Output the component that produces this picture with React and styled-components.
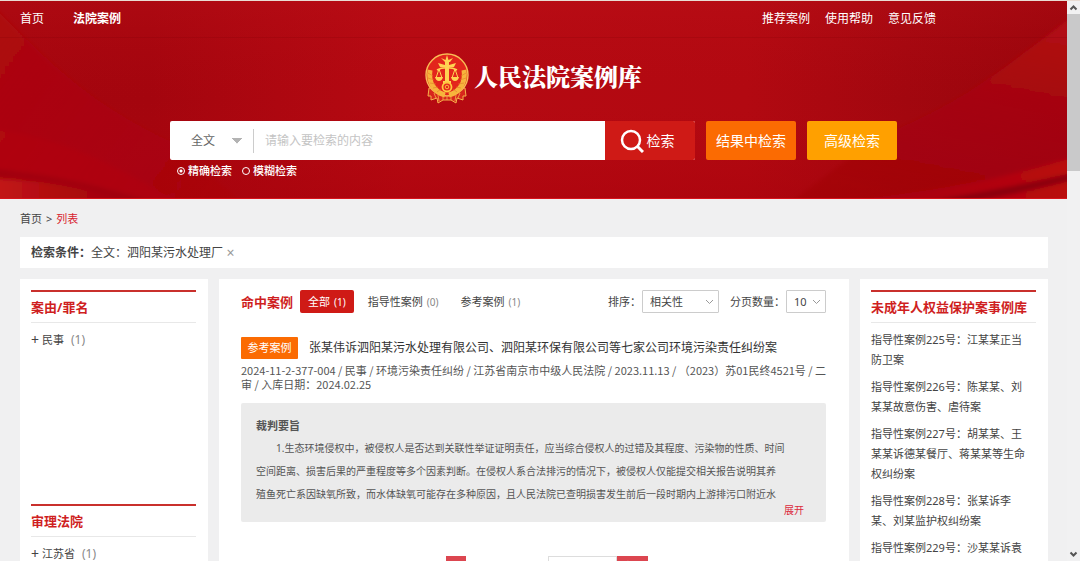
import React, { useState } from "react";
import styled, { createGlobalStyle, css } from "styled-components";

const GlobalStyle = createGlobalStyle`
  *, *::before, *::after { box-sizing: border-box; }
  body {
    margin: 0;
    background: #f0f0f1;
    color: #444;
    font-family: "Noto Sans", "Noto Sans CJK SC", sans-serif;
    font-size: 11px;
    line-height: 20px;
  }
  a { color: inherit; text-decoration: none; }
  button, input, select { font: inherit; color: inherit; margin: 0; }
  button { border: 0; padding: 0; cursor: pointer; }
  h1, h2, h3, p, ul, ol, dl { margin: 0; padding: 0; }
  ul, ol { list-style: none; }
`;

const Frame = styled.div`
  display: flex;
  height: 100vh;
  overflow: hidden;
  border-top: 1px solid #e9dcd3;
`;
const Page = styled.div`
  flex: 1;
  min-width: 0;
`;

/* window scroll bar */
const ScrollTrack = styled.div`
  width: 13px;
  display: flex;
  flex-direction: column;
  align-items: center;
  background: #f1f1f2;
`;
const ScrollThumb = styled.div`
  width: 100%;
  height: 28%;
  margin-bottom: auto;
  background: #c9c9ca;
`;
const ScrollArrow = styled.svg`
  width: 13px;
  height: 13px;
  flex: none;
  fill: none;
  stroke: #555;
  stroke-width: 2;
`;

/* header */
const Header = styled.header`
  position: relative;
  isolation: isolate;
  height: 198px;
  background: #ad0710;
  color: #fff;
  border-bottom: 1px solid #d6141c;
`;
const Drapery = styled.svg`
  position: absolute;
  inset: 0;
  z-index: -1;
  width: 100%;
  height: 100%;
`;
const TopNav = styled.nav`
  display: flex;
  justify-content: space-between;
  align-items: center;
  height: 37px;
  padding: 0 131px 0 20px;
  border-bottom: 1px solid rgba(120, 0, 8, 0.18);
  font-size: 12px;
`;
const NavGroup = styled.div`
  display: flex;
  gap: ${(p) => p.$gap}px;
`;
const NavLink = styled.a`
  font-weight: ${(p) => (p.$active ? 700 : 400)};
`;
const Brand = styled.h1`
  display: flex;
  justify-content: center;
  align-items: center;
  gap: 5px;
  height: 52px;
  margin-top: 15px;
  font-family: "Noto Serif CJK SC", "Noto Sans CJK SC", serif;
  font-size: 24px;
  font-weight: 900;
  line-height: 32px;
`;
const BrandName = styled.span`
  padding-bottom: 6px;
`;
const Emblem = styled.svg`
  width: 44px;
  height: 52px;
`;
const SearchForm = styled.form`
  width: 727px;
  max-width: 100%;
  margin: 16px auto 0;
`;
const SearchRow = styled.div`
  display: flex;
  gap: 11px;
  height: 39px;
`;
const SearchBox = styled.div`
  flex: 1;
  display: flex;
  align-items: center;
  border-radius: 2px;
  background: #fff;
  overflow: hidden;
`;
const ScopeSelect = styled.select`
  width: 84px;
  height: 24px;
  padding: 0 21px;
  border: 0;
  border-right: 1px solid #ccc;
  appearance: none;
  background: linear-gradient(to bottom left, #b3b3b3 50%, transparent 51%) 62px 9px / 5px 6px no-repeat,
    linear-gradient(to bottom right, #b3b3b3 50%, transparent 51%) 67px 9px / 5px 6px no-repeat;
  color: #666;
  font-size: 12px;
`;
const Keyword = styled.input`
  flex: 1;
  min-width: 0;
  height: 39px;
  padding: 0 11px;
  border: 0;
  outline: 0;
  font-size: 12px;
  &::placeholder { color: #c4c4c4; opacity: 1; }
`;
const tones = { red: "#cf1a16", orange: "#fb6b02", amber: "#ffa000" };
const ActionButton = styled.button`
  display: flex;
  justify-content: center;
  align-items: center;
  gap: 3px;
  width: 90px;
  height: 39px;
  padding-right: ${(p) => (p.$joined ? "6px" : "0")};
  border-radius: ${(p) => (p.$joined ? "0" : "2px")};
  background: ${(p) => tones[p.$tone]};
  color: #fff;
  font-size: 14px;
`;
const SearchIcon = styled.svg`
  width: 24px;
  height: 24px;
  fill: none;
  stroke: #fff;
`;
const Modes = styled.div`
  display: flex;
  gap: 10px;
  margin-top: 1px;
  padding-left: 7px;
`;
const ModeLabel = styled.label`
  display: flex;
  align-items: center;
  gap: 3px;
  font-weight: 500;
`;
const ModeRadio = styled.input`
  appearance: none;
  width: 8px;
  height: 8px;
  border: 1px solid #fff;
  border-radius: 50%;
  &:checked { background: radial-gradient(circle, #fff 1px, transparent 2px); }
`;

/* body */
const Body = styled.main`
  padding: 0 19px 0 20px;
`;
const Crumbs = styled.nav`
  display: flex;
  gap: 4px;
  padding: 10px 0 8px;
`;
const CrumbCurrent = styled.span`
  color: #d8232f;
`;
const Conditions = styled.section`
  display: flex;
  align-items: center;
  height: 31px;
  padding: 0 11px;
  background: #fff;
  font-size: 12px;
`;
const ClearButton = styled.button`
  width: 15px;
  background: none;
  color: #999;
  font-size: 14px;
`;
const Columns = styled.div`
  display: grid;
  grid-template-columns: 188px minmax(0, 1fr) 188px;
  gap: 11px;
  margin-top: 11px;
`;
const SidePanel = styled.aside`
  padding: 11px 12px 11px 11px;
  background: #fff;
`;
const Facet = styled.section`
  min-height: 214px;
  border-top: 2px solid #c9302c;
`;
const PanelTitle = styled.h2`
  padding: 5px 0;
  border-bottom: 1px solid #e8e8e8;
  color: #cf1f1f;
  font-size: 13px;
  font-weight: 700;
`;
const FacetItem = styled.button`
  display: flex;
  gap: 3px;
  margin-top: 7px;
  background: none;
  font-size: 11px;
`;
const PlusSign = styled.span`
  font-size: 14px;
`;
const Muted = styled.span`
  color: #888;
  font-size: ${(p) => (p.$small ? 10 : 12)}px;
  margin-left: 4px;
`;
const CaseLinks = styled.ul`
  display: grid;
  gap: 7px;
  margin-top: 7px;
  padding-right: 5px;
`;

const Results = styled.section`
  padding: 11px 23px 0 22px;
  background: #fff;
`;
const Toolbar = styled.div`
  display: flex;
  align-items: center;
  height: 23px;
`;
const ResultsTitle = styled.h2`
  margin-right: 7px;
  color: #cf1f1f;
  font-size: 13px;
  font-weight: 700;
`;
const Tab = styled.button`
  height: 23px;
  padding: 0 8px;
  margin-right: 6px;
  border-radius: 2px;
  background: none;
  ${(p) => p.$active && css`
    background: #cf1a16;
    color: #fff;
    ${Muted} { color: #fff; }
  `}
`;
const Sorting = styled.div`
  display: flex;
  align-items: center;
  gap: 11px;
  margin-left: auto;
`;
const SortLabel = styled.label`
  display: flex;
  align-items: center;
  gap: 1px;
`;
const SelectWrap = styled.span`
  position: relative;
  display: flex;
  width: ${(p) => p.$width}px;
`;
const SortSelect = styled.select`
  width: 100%;
  height: 23px;
  padding: 0 7px;
  border: 1px solid #ccc;
  border-radius: 1px;
  appearance: none;
  background: #fff;
`;
const Chevron = styled.svg`
  position: absolute;
  right: 5px;
  top: 8px;
  width: 9px;
  height: 8px;
  fill: none;
  stroke: #999;
  pointer-events: none;
`;
const CaseHead = styled.div`
  display: flex;
  align-items: center;
  gap: 11px;
  margin-top: 24px;
`;
const Tag = styled.span`
  width: 57px;
  height: 22px;
  border-radius: 1px;
  background: #fb6b02;
  color: #fff;
  line-height: 22px;
  text-align: center;
`;
const CaseTitle = styled.h3`
  font-size: 12px;
  font-weight: 400;
  color: #333;
`;
const Meta = styled.p`
  margin-top: 4px;
  color: #555;
  font-family: "Noto Sans CJK SC", sans-serif;
  line-height: 14px;
  white-space: nowrap;
`;
const Digest = styled.div`
  height: 119px;
  margin-top: 12px;
  padding: 12px 15px 0;
  border-radius: 2px;
  background: #ebebeb;
  color: #555;
`;
const DigestTitle = styled.h3`
  font-size: 11px;
  line-height: 22px;
`;
const DigestText = styled.p`
  font-size: 10px;
  line-height: 23px;
  text-indent: 2em;
`;
const Expand = styled.button`
  display: block;
  margin: -6px 7px 0 auto;
  background: none;
  color: #dc2a3c;
  font-size: 10px;
`;
const Pager = styled.nav`
  display: flex;
  justify-content: center;
  gap: 82px;
  margin-top: 34px;
  padding-left: 27px;
`;
const PageButton = styled.button`
  width: ${(p) => p.$width}px;
  height: 22px;
  background: #dc4650;
  color: #fff;
`;
const Jump = styled.div`
  display: flex;
`;
const JumpInput = styled.input`
  width: 69px;
  height: 22px;
  border: 1px solid #ddd;
`;

function CourtEmblem() {
  return (
    <Emblem viewBox="0 0 44 52" aria-hidden="true">
      <path d="M4 35 L3 43 L6 43 L6 47 L12 45 L13 50 L18 47 L26 47 L31 50 L32 45 L38 47 L38 43 L41 43 L40 35Z" fill="#d8271c" stroke="#f6b34a" strokeWidth="1" />
      <path d="M9 40 l2 5 M13 42 l1 6 M35 40 l-2 5 M31 42 l-1 6 M18 44 v3 M22 44 v3 M26 44 v3" stroke="#f6b34a" strokeWidth="0.8" />
      <circle cx="22" cy="22" r="21" fill="#e3261c" stroke="#f8bd55" strokeWidth="1.4" />
      <path d="M5 17 C3 29 9 39 20 42 M39 17 C41 29 35 39 24 42" fill="none" stroke="#f7b43c" strokeWidth="5" />
      <path d="M3 20 l5 3 M3 25 l6 2 M5 30 l6 1 M8 35 l5 -1 M12 39 l4 -3 M41 20 l-5 3 M41 25 l-6 2 M39 30 l-6 1 M36 35 l-5 -1 M32 39 l-4 -3" stroke="#e07a28" strokeWidth="0.6" />
      <path d="M20.5 7 L22 2 L23.5 7 L28 5 L25 9 L24 9 V12 L31 10 L29 14 L24 14.5 V29 H20 V14.5 L15 14 L13 10 L20 12 V9 L16 5Z" fill="#ffd352" />
      <path d="M12 17 C17 14 27 14 32 17" fill="none" stroke="#ffd352" strokeWidth="1.6" />
      <path d="M14 16 l-3 9 M14 16 l3 9 M30 16 l-3 9 M30 16 l3 9" stroke="#ffd352" strokeWidth="1" />
      <path d="M10 24 h8 q-1 4 -4 4 q-3 0 -4 -4Z M26 24 h8 q-1 4 -4 4 q-3 0 -4 -4Z" fill="#ffd352" />
      <path d="M18 28 h8 v3 h-8Z" fill="#ffd352" />
      <circle cx="22" cy="34" r="4.5" fill="#e3261c" stroke="#ffc83f" strokeWidth="1.8" />
      <circle cx="22" cy="34" r="1.8" fill="#e3261c" stroke="#ffc83f" strokeWidth="0.9" />
    </Emblem>
  );
}

function HeaderDrapery() {
  return (
    <Drapery viewBox="0 0 1067 198" preserveAspectRatio="none" aria-hidden="true">
      <defs>
        <linearGradient id="base" x1="0" x2="1">
          <stop offset="0" stopColor="#a5060e" />
          <stop offset="0.14" stopColor="#a4050e" />
          <stop offset="0.38" stopColor="#b60912" />
          <stop offset="0.7" stopColor="#b20911" />
          <stop offset="0.85" stopColor="#a2070f" />
          <stop offset="1" stopColor="#98040b" />
        </linearGradient>
        <linearGradient id="shade" x1="0" y1="0" x2="0" y2="1">
          <stop offset="0" stopColor="#c0121a" stopOpacity="0.3" />
          <stop offset="0.5" stopColor="#b20810" stopOpacity="0" />
          <stop offset="1" stopColor="#a8000a" stopOpacity="0.4" />
        </linearGradient>
        <linearGradient id="leftFold" x1="0" y1="0" x2="1" y2="0.6">
          <stop offset="0" stopColor="#ad0810" />
          <stop offset="1" stopColor="#ac0610" stopOpacity="0.3" />
        </linearGradient>
        <linearGradient id="leftRibbon" x1="0" x2="1">
          <stop offset="0" stopColor="#c61a19" />
          <stop offset="1" stopColor="#b4060e" stopOpacity="0" />
        </linearGradient>
        <linearGradient id="rightFold" x1="1" y1="0" x2="0.7" y2="1">
          <stop offset="0" stopColor="#b40c15" />
          <stop offset="1" stopColor="#9d040c" stopOpacity="0.4" />
        </linearGradient>
        <linearGradient id="rightRibbon" x1="0" x2="1">
          <stop offset="0" stopColor="#b0060d" stopOpacity="0.3" />
          <stop offset="1" stopColor="#bb080e" />
        </linearGradient>
        <filter id="soft" x="-5%" y="-20%" width="110%" height="140%">
          <feGaussianBlur stdDeviation="2" />
        </filter>
      </defs>
      <rect width="1067" height="198" fill="url(#base)" />
      <rect width="1067" height="198" fill="url(#shade)" />
      <g filter="url(#soft)">
        <path d="M-10 2 C45 58 90 105 175 143 L250 210 L-10 210Z" fill="url(#leftFold)" />
        <path d="M-10 128 C60 137 110 160 190 210 L-10 210Z" fill="#b3070f" opacity="0.5" />
        <path d="M-10 168 C50 174 90 183 155 202 L-10 210Z" fill="#98030b" opacity="0.55" />
        <path d="M-10 178 C45 181 85 188 130 202 L-10 210Z" fill="url(#leftRibbon)" />
        <path d="M1077 12 C1000 70 960 105 880 135 L780 210 L1077 210Z" fill="url(#rightFold)" />
        <path d="M1077 156 C1010 176 950 190 850 200 L1077 210Z" fill="url(#rightRibbon)" />
        <path d="M1077 172 C1030 183 990 191 925 202 L965 202 C1020 194 1040 188 1077 179Z" fill="#84040a" opacity="0.85" />
      </g>
    </Drapery>
  );
}

function Dropdown({ label, width, options }) {
  return (
    <SortLabel>
      {label}
      <SelectWrap $width={width}>
        <SortSelect>
          {options.map((o) => <option key={o}>{o}</option>)}
        </SortSelect>
        <Chevron viewBox="0 0 9 8" aria-hidden="true"><path d="M1 2 L4.5 5.5 L8 2" /></Chevron>
      </SelectWrap>
    </SortLabel>
  );
}

const facets = [
  { title: "案由/罪名", item: "民事", count: 1 },
  { title: "审理法院", item: "江苏省", count: 1 },
];
const tabs = [["全部", 1], ["指导性案例", 0], ["参考案例", 1]];
const juvenileCases = [
  "指导性案例225号：江某某正当防卫案",
  "指导性案例226号：陈某某、刘某某故意伤害、虐待案",
  "指导性案例227号：胡某某、王某某诉德某餐厅、蒋某某等生命权纠纷案",
  "指导性案例228号：张某诉李某、刘某监护权纠纷案",
  "指导性案例229号：沙某某诉袁某某探望权纠纷案",
];

export default function App() {
  const [mode, setMode] = useState("精确检索");
  const [tab, setTab] = useState("全部");
  return (
    <>
      <GlobalStyle />
      <Frame>
        <Page>
          <Header>
            <HeaderDrapery />
            <TopNav>
              <NavGroup $gap={29}>
                <NavLink href="#home">首页</NavLink>
                <NavLink href="#cases" $active>法院案例</NavLink>
              </NavGroup>
              <NavGroup $gap={15}>
                <NavLink href="#recommend">推荐案例</NavLink>
                <NavLink href="#help">使用帮助</NavLink>
                <NavLink href="#feedback">意见反馈</NavLink>
              </NavGroup>
            </TopNav>
            <Brand><CourtEmblem /><BrandName>人民法院案例库</BrandName></Brand>
            <SearchForm onSubmit={(e) => e.preventDefault()}>
              <SearchRow>
                <SearchBox>
                  <ScopeSelect aria-label="检索范围"><option>全文</option></ScopeSelect>
                  <Keyword aria-label="检索内容" placeholder="请输入要检索的内容" />
                  <ActionButton $tone="red" $joined>
                    <SearchIcon viewBox="0 0 24 24" aria-hidden="true">
                      <circle cx="11" cy="11" r="9" strokeWidth="2.5" />
                      <path d="M17.5 17.5 L23 23" strokeWidth="3" />
                    </SearchIcon>
                    检索
                  </ActionButton>
                </SearchBox>
                <ActionButton type="button" $tone="orange">结果中检索</ActionButton>
                <ActionButton type="button" $tone="amber">高级检索</ActionButton>
              </SearchRow>
              <Modes>
                {["精确检索", "模糊检索"].map((m) => (
                  <ModeLabel key={m}>
                    <ModeRadio type="radio" name="mode" checked={mode === m} onChange={() => setMode(m)} />
                    {m}
                  </ModeLabel>
                ))}
              </Modes>
            </SearchForm>
          </Header>

          <Body>
            <Crumbs>
              <a href="#home">首页</a>
              <span>&gt;</span>
              <CrumbCurrent>列表</CrumbCurrent>
            </Crumbs>
            <Conditions>
              <strong>检索条件：</strong>
              <span>全文：泗阳某污水处理厂</span>
              <ClearButton aria-label="清除">×</ClearButton>
            </Conditions>
            <Columns>
              <SidePanel>
                {facets.map((f) => (
                  <Facet key={f.title}>
                    <PanelTitle>{f.title}</PanelTitle>
                    <FacetItem><PlusSign>+</PlusSign><span>{f.item} <Muted>({f.count})</Muted></span></FacetItem>
                  </Facet>
                ))}
              </SidePanel>

              <Results>
                <Toolbar>
                  <ResultsTitle>命中案例</ResultsTitle>
                  {tabs.map(([name, count]) => (
                    <Tab key={name} $active={tab === name} onClick={() => setTab(name)}>
                      {name}<Muted $small>({count})</Muted>
                    </Tab>
                  ))}
                  <Sorting>
                    <Dropdown label="排序：" width={77} options={["相关性"]} />
                    <Dropdown label="分页数量：" width={40} options={["10"]} />
                  </Sorting>
                </Toolbar>
                <article>
                  <CaseHead>
                    <Tag>参考案例</Tag>
                    <CaseTitle><a href="#case">张某伟诉泗阳某污水处理有限公司、泗阳某环保有限公司等七家公司环境污染责任纠纷案</a></CaseTitle>
                  </CaseHead>
                  <Meta>
                    2024-11-2-377-004 / 民事 / 环境污染责任纠纷 / 江苏省南京市中级人民法院 / 2023.11.13 / （2023）苏01民终4521号 / 二<br />
                    审 / 入库日期：2024.02.25
                  </Meta>
                  <Digest>
                    <DigestTitle>裁判要旨</DigestTitle>
                    <DigestText>
                      1.生态环境侵权中，被侵权人是否达到关联性举证证明责任，应当综合侵权人的过错及其程度、污染物的性质、时间<br />
                      空间距离、损害后果的严重程度等多个因素判断。在侵权人系合法排污的情况下，被侵权人仅能提交相关报告说明其养<br />
                      殖鱼死亡系因缺氧所致，而水体缺氧可能存在多种原因，且人民法院已查明损害发生前后一段时期内上游排污口附近水
                    </DigestText>
                    <Expand>展开</Expand>
                  </Digest>
                </article>
                <Pager aria-label="分页">
                  <PageButton $width={20}>1</PageButton>
                  <Jump>
                    <JumpInput aria-label="页码" />
                    <PageButton $width={31}>跳转</PageButton>
                  </Jump>
                </Pager>
              </Results>

              <SidePanel>
                <Facet>
                  <PanelTitle>未成年人权益保护案事例库</PanelTitle>
                  <CaseLinks>
                    {juvenileCases.map((c) => <li key={c}><a href="#case">{c}</a></li>)}
                  </CaseLinks>
                </Facet>
              </SidePanel>
            </Columns>
          </Body>
        </Page>
        <ScrollTrack aria-hidden="true">
          <ScrollArrow viewBox="0 0 13 13"><path d="M3.5 8.5 L6.5 5.5 L9.5 8.5" /></ScrollArrow>
          <ScrollThumb />
          <ScrollArrow viewBox="0 0 13 13"><path d="M3.5 4.5 L6.5 7.5 L9.5 4.5" /></ScrollArrow>
        </ScrollTrack>
      </Frame>
    </>
  );
}
